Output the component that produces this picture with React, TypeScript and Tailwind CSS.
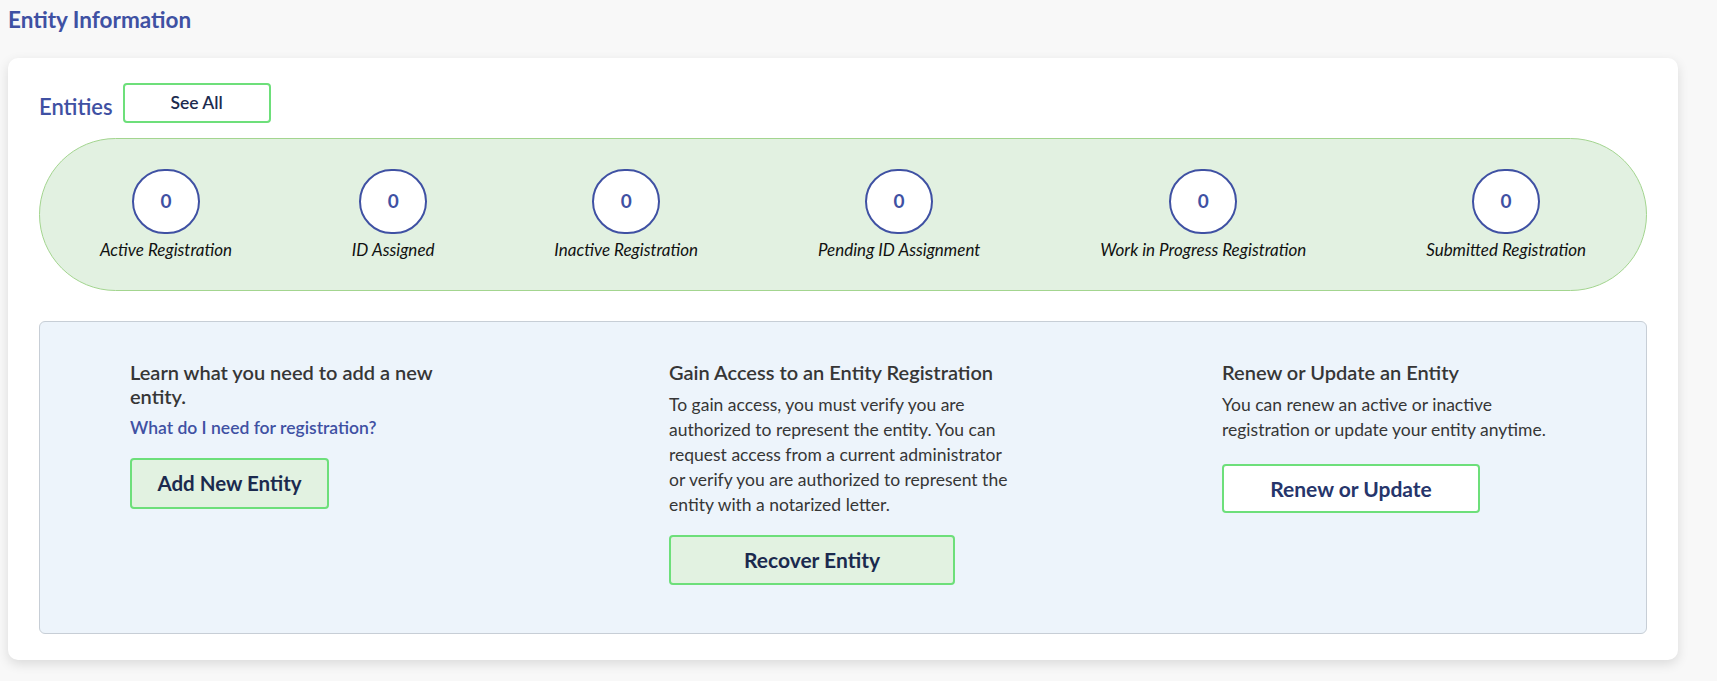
import React from 'react';

const font = { fontFamily: 'Lato, "Noto Sans", sans-serif' };

const stats = [
  'Active Registration',
  'ID Assigned',
  'Inactive Registration',
  'Pending ID Assignment',
  'Work in Progress Registration',
  'Submitted Registration',
];

const App: React.FC = () => {
  return (
    <div className="min-h-[681px] bg-[#f8f8f8] pl-2 pr-[39px] pt-[6px]" style={font}>
      <h1 className="text-[22.5px] font-bold leading-[28px] text-[#3f51a3]">Entity Information</h1>

      <div className="mt-[24px] rounded-[10px] bg-white px-[31px] pt-[25px] pb-[26px] shadow-[0_4px_12px_rgba(0,0,0,0.12)]">
        <div className="flex items-center gap-[10px]">
          <span className="mt-[6px] text-[22px] font-semibold text-[#3f51a3]">Entities</span>
          <button className="flex h-[40px] w-[148px] items-center justify-center rounded-[4px] border-2 border-[#6ddf7a] bg-white text-[17.5px] font-semibold text-[#1b2a4e]">
            See All
          </button>
        </div>

        <div className="mt-[15px] flex h-[153px] items-center justify-around rounded-full border border-[#a3d58f] bg-[#e2f1e1]">
          {stats.map((label) => (
            <div key={label} className="flex flex-col items-center">
              <div className="flex h-[65px] w-[68px] items-center justify-center rounded-full border-2 border-[#3f51a3] bg-white text-[19px] font-bold text-[#3f51a3]">
                0
              </div>
              <span className="mt-[5px] text-[17px] italic leading-[22px] text-[#111]">{label}</span>
            </div>
          ))}
        </div>

        <div className="mt-[30px] grid h-[313px] grid-cols-[539px_553px_1fr] rounded-[6px] border border-[#c7ced6] bg-[#edf4fb] pl-[90px] pt-[38px]">
          <div>
            <h3 className="text-[20px] font-semibold leading-[24px] text-[#363636]">
              Learn what you need to add a new
              <br />
              entity.
            </h3>
            <a className="mt-[8px] block text-[17.5px] font-semibold leading-[24px] text-[#3f51a3]" href="#">
              What do I need for registration?
            </a>
            <button className="mt-[18px] h-[51px] w-[199px] rounded-[4px] border-2 border-[#6ddf7a] bg-[#e2f2e1] text-[20.5px] font-bold text-[#1b2a4e]">
              Add New Entity
            </button>
          </div>

          <div>
            <h3 className="text-[20px] font-semibold leading-[24px] text-[#363636]">Gain Access to an Entity Registration</h3>
            <p className="mt-[8px] text-[17.5px] leading-[25px] text-[#363636]">
              To gain access, you must verify you are
              <br />
              authorized to represent the entity. You can
              <br />
              request access from a current administrator
              <br />
              or verify you are authorized to represent the
              <br />
              entity with a notarized letter.
            </p>
            <button className="mt-[18px] h-[50px] w-[286px] rounded-[4px] border-2 border-[#6ddf7a] bg-[#e2f2e1] text-[21px] font-bold text-[#1b2a4e]">
              Recover Entity
            </button>
          </div>

          <div>
            <h3 className="text-[20px] font-semibold leading-[24px] text-[#363636]">Renew or Update an Entity</h3>
            <p className="mt-[8px] text-[17.5px] leading-[25px] text-[#363636]">
              You can renew an active or inactive
              <br />
              registration or update your entity anytime.
            </p>
            <button className="mt-[22px] h-[49px] w-[258px] rounded-[4px] border-2 border-[#6ddf7a] bg-white text-[21px] font-bold text-[#26356b]">
              Renew or Update
            </button>
          </div>
        </div>
      </div>
    </div>
  );
};

export default App;
